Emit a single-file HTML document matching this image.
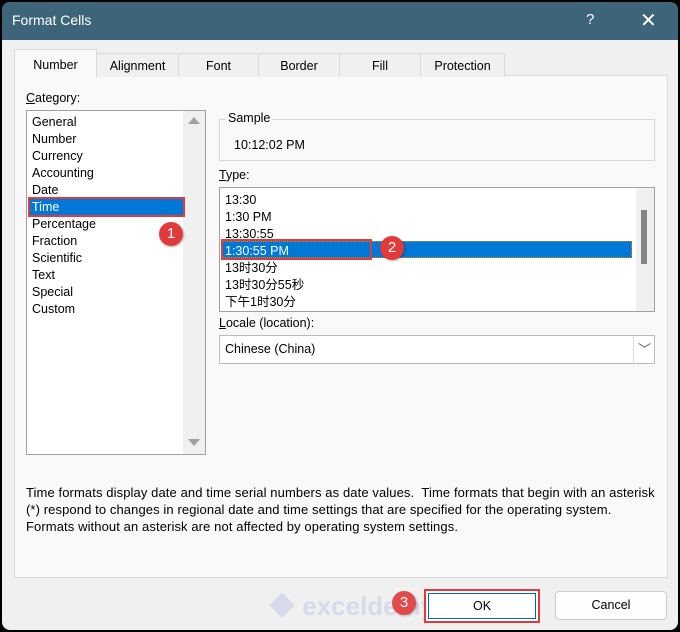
<!DOCTYPE html>
<html><head><meta charset="utf-8"><style>
*{box-sizing:border-box;margin:0;padding:0}
body{width:680px;height:632px;background:#000;font-family:"Segoe UI","Liberation Sans","Noto Sans CJK SC",sans-serif;font-size:12.5px;color:#000;overflow:hidden;position:relative}
.win{position:absolute;left:2px;top:2px;width:676px;height:628px;background:#f0f0f0;border-radius:8px;overflow:hidden}
.title{position:absolute;left:0;top:0;width:676px;height:38px;background:#3d6478;color:#fff;font-size:14px}
.a{position:absolute;white-space:nowrap}
.tab{position:absolute;top:51px;height:24px;border:1px solid #d9d9d9;border-bottom:none;background:#f0f0f0;text-align:center;line-height:24px;font-size:12.5px}
.panel{position:absolute;left:12px;top:73px;width:654px;height:503px;background:#f9f9f9;border:1px solid #d9d9d9}
.box{position:absolute;background:#fff;border:1px solid #a0a0a0}
.badge{position:absolute;width:24px;height:24px;border-radius:50%;background:#e03a3a;color:#fff;text-align:center;line-height:24px;font-size:15px;box-shadow:1px 1px 2px rgba(0,0,0,.3)}
</style></head><body><div class="win">
<div class="title"><span class="a" style="left:10px;top:10px">Format Cells</span><span class="a" style="left:584px;top:9px;font-size:15px">?</span><span class="a" style="left:638px;top:6px;font-size:20px;font-weight:300">✕</span></div>
<div class="panel"></div>
<div class="tab" style="left:12px;top:47px;width:83px;height:29px;background:#f9f9f9;line-height:30px;z-index:2">Number</div>
<div class="tab" style="left:94px;width:83px">Alignment</div>
<div class="tab" style="left:176px;width:81px">Font</div>
<div class="tab" style="left:256px;width:82px">Border</div>
<div class="tab" style="left:337px;width:82px">Fill</div>
<div class="tab" style="left:418px;width:85px">Protection</div>
<span class="a" style="left:24px;top:89px"><u>C</u>ategory:</span>
<div class="box" style="left:24px;top:108px;width:180px;height:345px">
 <div style="position:absolute;left:156px;top:0;width:22px;height:343px;background:#f0f0f0"></div>
 <div class="a" style="left:161px;top:6px;width:0;height:0;border-left:6px solid transparent;border-right:6px solid transparent;border-bottom:7px solid #a0a0a0"></div>
 <div class="a" style="left:161px;top:328px;width:0;height:0;border-left:6px solid transparent;border-right:6px solid transparent;border-top:7px solid #a0a0a0"></div>
 <div class="a" style="left:1px;top:86px;width:157px;height:20px;background:#0078d7;border:2px solid #e03a3a"></div>
 <div class="a" style="left:5px;top:3px;line-height:17px">General<br>Number<br>Currency<br>Accounting<br>Date<br><span style="color:#fff">Time</span><br>Percentage<br>Fraction<br>Scientific<br>Text<br>Special<br>Custom</div>
</div>
<div class="badge" style="left:157px;top:220px">1</div>
<div class="a" style="left:217px;top:117px;width:436px;height:42px;border:1px solid #d9d9d9"></div>
<span class="a" style="left:224px;top:109px;background:#f9f9f9;padding:0 2px">Sample</span>
<span class="a" style="left:232px;top:136px">10:12:02 PM</span>
<span class="a" style="left:217px;top:166px"><u>T</u>ype:</span>
<div class="box" style="left:217px;top:185px;width:436px;height:125px">
 <div style="position:absolute;left:416px;top:0;width:18px;height:123px;background:#f0f0f0"></div>
 <div class="a" style="left:421px;top:22px;width:6px;height:54px;background:#858585"></div>
 <div class="a" style="left:2px;top:53px;width:410px;height:17px;background:#0078d7;border:1px dotted #e08a00"></div>
 <div class="a" style="left:1px;top:51px;width:151px;height:21px;border:2px solid #e03a3a"></div>
 <div class="a" style="left:5px;top:4px;line-height:17px">13:30<br>1:30 PM<br>13:30:55<br><span style="color:#fff">1:30:55 PM</span><br>13时30分<br>13时30分55秒<br>下午1时30分</div>
</div>
<div class="badge" style="left:378px;top:234px">2</div>
<span class="a" style="left:217px;top:314px"><u>L</u>ocale (location):</span>
<div class="box" style="left:217px;top:333px;width:436px;height:29px;border-color:#bbb">
 <span class="a" style="left:5px;top:6px">Chinese (China)</span>
 <div class="a" style="left:413px;top:0;width:1px;height:27px;background:#ddd"></div>
 <span class="a" style="left:418px;top:3px;color:#666;font-size:13px">﹀</span>
</div>
<div class="a" style="left:24px;top:482px;line-height:17px;font-size:13px;letter-spacing:.1px">Time formats display date and time serial numbers as date values.&nbsp; Time formats that begin with an asterisk<br>(*) respond to changes in regional date and time settings that are specified for the operating system.<br>Formats without an asterisk are not affected by operating system settings.</div>
<div class="a" style="left:267px;top:584px;color:#c5cde8;font-size:26px;font-weight:bold;opacity:.6">◆ exceldemy</div>
<div class="a" style="left:422px;top:587px;width:116px;height:34px;border:2px solid #e03a3a;background:#fff"><div style="margin:2px;height:26px;border:1px solid #0067c0;text-align:center;line-height:24px">OK</div></div>
<div class="a" style="left:553px;top:589px;width:112px;height:29px;border:1px solid #ccc;border-radius:4px;background:#fdfdfd;text-align:center;line-height:27px">Cancel</div>
<div class="badge" style="left:390px;top:589px;opacity:.9">3</div>
</div></body></html>
